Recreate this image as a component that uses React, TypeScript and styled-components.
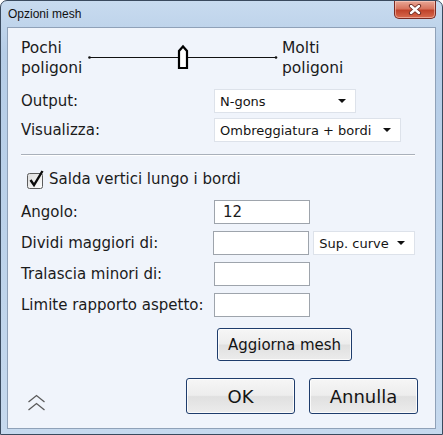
import React from 'react';
import styled, { createGlobalStyle } from 'styled-components';

const GlobalStyle = createGlobalStyle`
  html, body { margin: 0; padding: 0; background: #ffffff; }
  body { font-family: "DejaVu Sans", "Liberation Sans", sans-serif; }
`;

const Frame = styled.div`
  box-sizing: border-box;
  width: 443px;
  height: 435px;
  display: flex;
  flex-direction: column;
  border: 1px solid #3a4a5e;
  border-radius: 7px 7px 0 0;
  background: linear-gradient(180deg, #c8dbef 0%, #b6cde7 12%, #bcd2ea 55%, #c6d9ee 100%);
  padding: 0 6px 5px 6px;
`;

const TitleBar = styled.div`
  height: 26px;
  display: flex;
  align-items: flex-start;
  justify-content: space-between;
`;

const Title = styled.span`
  margin-left: 1px;
  line-height: 27px;
  font-family: "Liberation Sans", Arial, sans-serif;
  font-size: 12px;
  color: #111;
`;

const CloseButton = styled.div`
  width: 42px;
  height: 18px;
  display: flex;
  align-items: center;
  justify-content: center;
  border: 1px solid #7a2a22;
  border-top: none;
  border-radius: 0 0 5px 5px;
  box-sizing: border-box;
  background: linear-gradient(180deg, #e9a897 0%, #d7745e 45%, #c0432b 55%, #d86a4e 100%);
  box-shadow: inset 0 0 0 1px rgba(255, 220, 210, 0.5);
`;

const Client = styled.div`
  flex: 1;
  display: flex;
  flex-direction: column;
  border: 1px solid #8fa1b8;
  background: #f0f4fb;
  padding: 10px 20px 0 13px;
  color: #1b1b1b;
  font-size: 15px;
`;

const SliderRow = styled.div`
  display: flex;
  align-items: center;
  height: 40px;
  line-height: 20px;
  font-size: 15.5px;
`;

const SliderLabel = styled.div<{ $width: number }>`
  width: ${p => p.$width}px;
`;

const Row = styled.div<{ $top: number }>`
  display: flex;
  align-items: center;
  height: 24px;
  margin-top: ${p => p.$top}px;
`;

const Label = styled.div`
  width: 193px;
  white-space: nowrap;
`;

const Select = styled.div<{ $width: number }>`
  box-sizing: border-box;
  width: ${p => p.$width}px;
  height: 24px;
  display: flex;
  align-items: center;
  justify-content: space-between;
  padding: 0 9px 0 5px;
  background: #ffffff;
  border: 1px solid #dde2ea;
  font-size: 13px;
  color: #141414;
`;

const Arrow = styled.span`
  width: 0;
  height: 0;
  border-left: 4px solid transparent;
  border-right: 4px solid transparent;
  border-top: 4px solid #111;
`;

const Input = styled.div<{ $gap?: number }>`
  box-sizing: border-box;
  width: 96px;
  height: 24px;
  display: flex;
  align-items: center;
  padding-left: 8px;
  margin-right: ${p => p.$gap ?? 0}px;
  background: #ffffff;
  border: 1px solid #9ea4ac;
  font-size: 15px;
`;

const Separator = styled.div`
  margin-top: 12px;
  height: 1px;
  background: #a9b0ba;
  box-shadow: 0 1px 0 #ffffff;
`;

const CheckRow = styled.label`
  display: flex;
  align-items: center;
  gap: 3px;
  margin-top: 14px;
  margin-left: 5px;
  height: 20px;
`;

const Button = styled.div<{ $width: number; $height: number; $size: number }>`
  box-sizing: border-box;
  width: ${p => p.$width}px;
  height: ${p => p.$height}px;
  display: flex;
  align-items: center;
  justify-content: center;
  border: 1px solid #1e3c6c;
  border-radius: 3px;
  background: linear-gradient(180deg, #f6f6f6 0%, #ededed 48%, #e0e0e0 52%, #ececec 100%);
  box-shadow: inset 0 0 0 1px rgba(255, 255, 255, 0.8);
  font-size: ${p => p.$size}px;
  color: #141414;
`;

const UpdateButton = styled(Button)`
  margin-top: 11px;
  margin-left: 196px;
`;

const Footer = styled.div`
  display: flex;
  align-items: flex-end;
  margin-top: 17px;
  margin-right: -3px;
`;

const Expand = styled.div`
  margin-left: 6px;
  margin-bottom: 2px;
  display: flex;
`;

const FooterButtons = styled.div`
  margin-left: auto;
  display: flex;
  gap: 14px;
`;

function CloseGlyph() {
  return (
    <svg width="14" height="11" viewBox="0 0 14 11">
      <path d="M3 2 L11 9 M11 2 L3 9" stroke="#6b2a22" strokeWidth="4.2" strokeLinecap="round" />
      <path d="M3 2 L11 9 M11 2 L3 9" stroke="#ffffff" strokeWidth="2.4" strokeLinecap="round" />
    </svg>
  );
}

function DensitySlider() {
  return (
    <svg width="194" height="40" viewBox="0 0 194 40">
      <line x1="1" y1="19.5" x2="188" y2="19.5" stroke="#111" strokeWidth="1" />
      <circle cx="1.5" cy="19.5" r="1.3" fill="#111" />
      <circle cx="188" cy="19.5" r="1.3" fill="#111" />
      <path d="M91 30 L91 13 L95 8.5 L99 13 L99 30 Z" fill="#ffffff" stroke="#000" strokeWidth="2.2" />
    </svg>
  );
}

function CheckBox() {
  return (
    <svg width="20" height="21" viewBox="0 0 20 21">
      <defs>
        <linearGradient id="cbfill" x1="0" y1="0" x2="1" y2="1">
          <stop offset="0" stopColor="#dcdcdc" />
          <stop offset="1" stopColor="#ffffff" />
        </linearGradient>
      </defs>
      <rect x="1.5" y="4.5" width="15" height="15" rx="2" fill="url(#cbfill)" stroke="#5c5c5c" />
      <path d="M4.5 11 L8 16 L16.5 2" fill="none" stroke="#0c0c0c" strokeWidth="2.4" strokeLinejoin="miter" />
    </svg>
  );
}

function DoubleChevron() {
  return (
    <svg width="19" height="18" viewBox="0 0 19 18">
      <path d="M1.5 8 L9.5 1.5 L17.5 8 M1.5 16 L9.5 9.5 L17.5 16" fill="none" stroke="#5a5a5a" strokeWidth="1.3" />
    </svg>
  );
}

const fields = [
  { label: 'Angolo:', value: '12', top: 11 },
  { label: 'Dividi maggiori di:', value: '', top: 7, select: 'Sup. curve' },
  { label: 'Tralascia minori di:', value: '', top: 7 },
  { label: 'Limite rapporto aspetto:', value: '', top: 7 },
];

export default function App() {
  return (
    <>
      <GlobalStyle />
      <Frame>
        <TitleBar>
          <Title>Opzioni mesh</Title>
          <CloseButton><CloseGlyph /></CloseButton>
        </TitleBar>
        <Client>
          <SliderRow>
            <SliderLabel $width={67}>Pochi<br />poligoni</SliderLabel>
            <DensitySlider />
            <SliderLabel $width={80}>Molti<br />poligoni</SliderLabel>
          </SliderRow>

          <Row $top={11}>
            <Label>Output:</Label>
            <Select $width={142}>N-gons<Arrow /></Select>
          </Row>
          <Row $top={5}>
            <Label>Visualizza:</Label>
            <Select $width={187}>Ombreggiatura + bordi<Arrow /></Select>
          </Row>

          <Separator />

          <CheckRow>
            <CheckBox />
            <span>Salda vertici lungo i bordi</span>
          </CheckRow>

          {fields.map(f => (
            <Row key={f.label} $top={f.top}>
              <Label>{f.label}</Label>
              <Input $gap={f.select ? 4 : 0}>{f.value}</Input>
              {f.select && <Select $width={102}>{f.select}<Arrow /></Select>}
            </Row>
          ))}

          <UpdateButton $width={135} $height={33} $size={15}>Aggiorna mesh</UpdateButton>

          <Footer>
            <Expand><DoubleChevron /></Expand>
            <FooterButtons>
              <Button $width={109} $height={36} $size={18}>OK</Button>
              <Button $width={109} $height={36} $size={18}>Annulla</Button>
            </FooterButtons>
          </Footer>
        </Client>
      </Frame>
    </>
  );
}
